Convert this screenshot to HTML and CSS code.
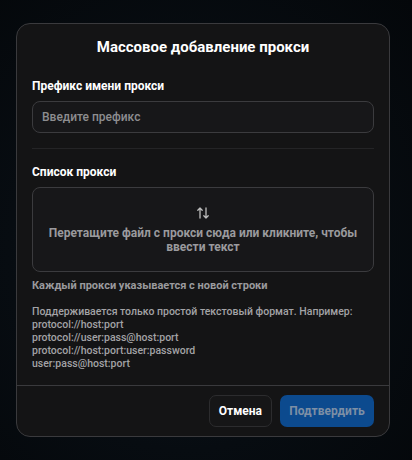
FILE: index.html
```html
<!DOCTYPE html>
<html lang="ru">
<head>
<meta charset="utf-8">
<link rel="stylesheet" href="styles.css">
</head>
<body>
<div class="modal">
  <h1 class="title">Массовое добавление прокси</h1>
  <div class="body">
    <label class="label">Префикс имени прокси</label>
    <div class="input">Введите префикс</div>
    <div class="divider"></div>
    <label class="label">Список прокси</label>
    <div class="drop">
      <svg class="drop-icon" width="14" height="14" viewBox="0 0 14 14" fill="none" stroke="#bdbdbd" stroke-width="1.3" stroke-linecap="round" stroke-linejoin="round">
        <path d="M4 12V2M1.8 4.2L4 2l2.2 2.2"/>
        <path d="M10 2v10M7.8 9.8L10 12l2.2-2.2"/>
      </svg>
      <div class="drop-text">Перетащите файл с прокси сюда или кликните, чтобы ввести текст</div>
    </div>
    <p class="hint">Каждый прокси указывается с новой строки</p>
    <p class="formats">Поддерживается только простой текстовый формат. Например:<br>protocol://host:port<br>protocol://user:pass@host:port<br>protocol://host:port:user:password<br>user:pass@host:port</p>
  </div>
  <div class="footer">
    <button class="btn btn-cancel">Отмена</button>
    <button class="btn btn-ok">Подтвердить</button>
  </div>
</div>
</body>
</html>
```
FILE: styles.css
```css
html, body {
  margin: 0;
  height: 100%;
}
body {
  font-family: Roboto, "Liberation Sans", sans-serif;
  background: radial-gradient(ellipse at 45% 55%, #0c1822 0%, #070c11 55%, #04070a 100%);
  padding-top: 23px;
  box-sizing: border-box;
}
.modal {
  margin-left: 16px;
  width: 374px;
  box-sizing: border-box;
  background: #141415;
  border: 1px solid #3a3a3d;
  border-radius: 14px;
  color: #fff;
}
.title {
  margin: 0;
  padding-top: 13px;
  font-size: 15px;
  line-height: 20px;
  font-weight: 700;
  text-align: center;
}
.body {
  padding: 21px 15px 15px;
  display: flex;
  flex-direction: column;
}
.label {
  font-size: 12px;
  line-height: 16px;
  font-weight: 700;
  color: #fff;
}
.input {
  margin-top: 7px;
  height: 32px;
  box-sizing: border-box;
  border: 1px solid #3b3b3e;
  border-radius: 8px;
  background: #171719;
  padding: 0 9px;
  display: flex;
  align-items: center;
  font-size: 12px;
  font-weight: 500;
  color: #8d8d90;
}
.divider {
  height: 1px;
  background: #242426;
  margin: 15px 0 15px;
}
.drop {
  margin-top: 7px;
  height: 85px;
  box-sizing: border-box;
  border: 1px solid #3b3b3e;
  border-radius: 8px;
  background: #171719;
  display: flex;
  flex-direction: column;
  align-items: center;
  justify-content: center;
  padding: 0 10px;
}
.drop-icon {
  margin-bottom: 6px;
}
.drop-text {
  font-size: 12px;
  line-height: 14px;
  font-weight: 700;
  color: #9a9a9d;
  text-align: center;
}
.hint {
  margin: 7px 0 0;
  font-size: 11px;
  line-height: 14px;
  font-weight: 700;
  color: #9a9a9d;
}
.formats {
  margin: 12px 0 0;
  font-size: 10.5px;
  line-height: 13px;
  font-weight: 500;
  color: #a3a3a6;
}
.footer {
  border-top: 1px solid #3a3a3d;
  padding: 9px 15px 9px;
  display: flex;
  justify-content: flex-end;
  gap: 8px;
}
.btn {
  height: 32px;
  border-radius: 7px;
  font-family: inherit;
  font-size: 12px;
  font-weight: 700;
  padding: 0 9px;
}
.btn-cancel {
  background: #161617;
  border: 1px solid #2c2c2e;
  color: #fff;
}
.btn-ok {
  background: #0c4a8e;
  border: none;
  color: #7d8fa5;
  width: 94px;
}
```
